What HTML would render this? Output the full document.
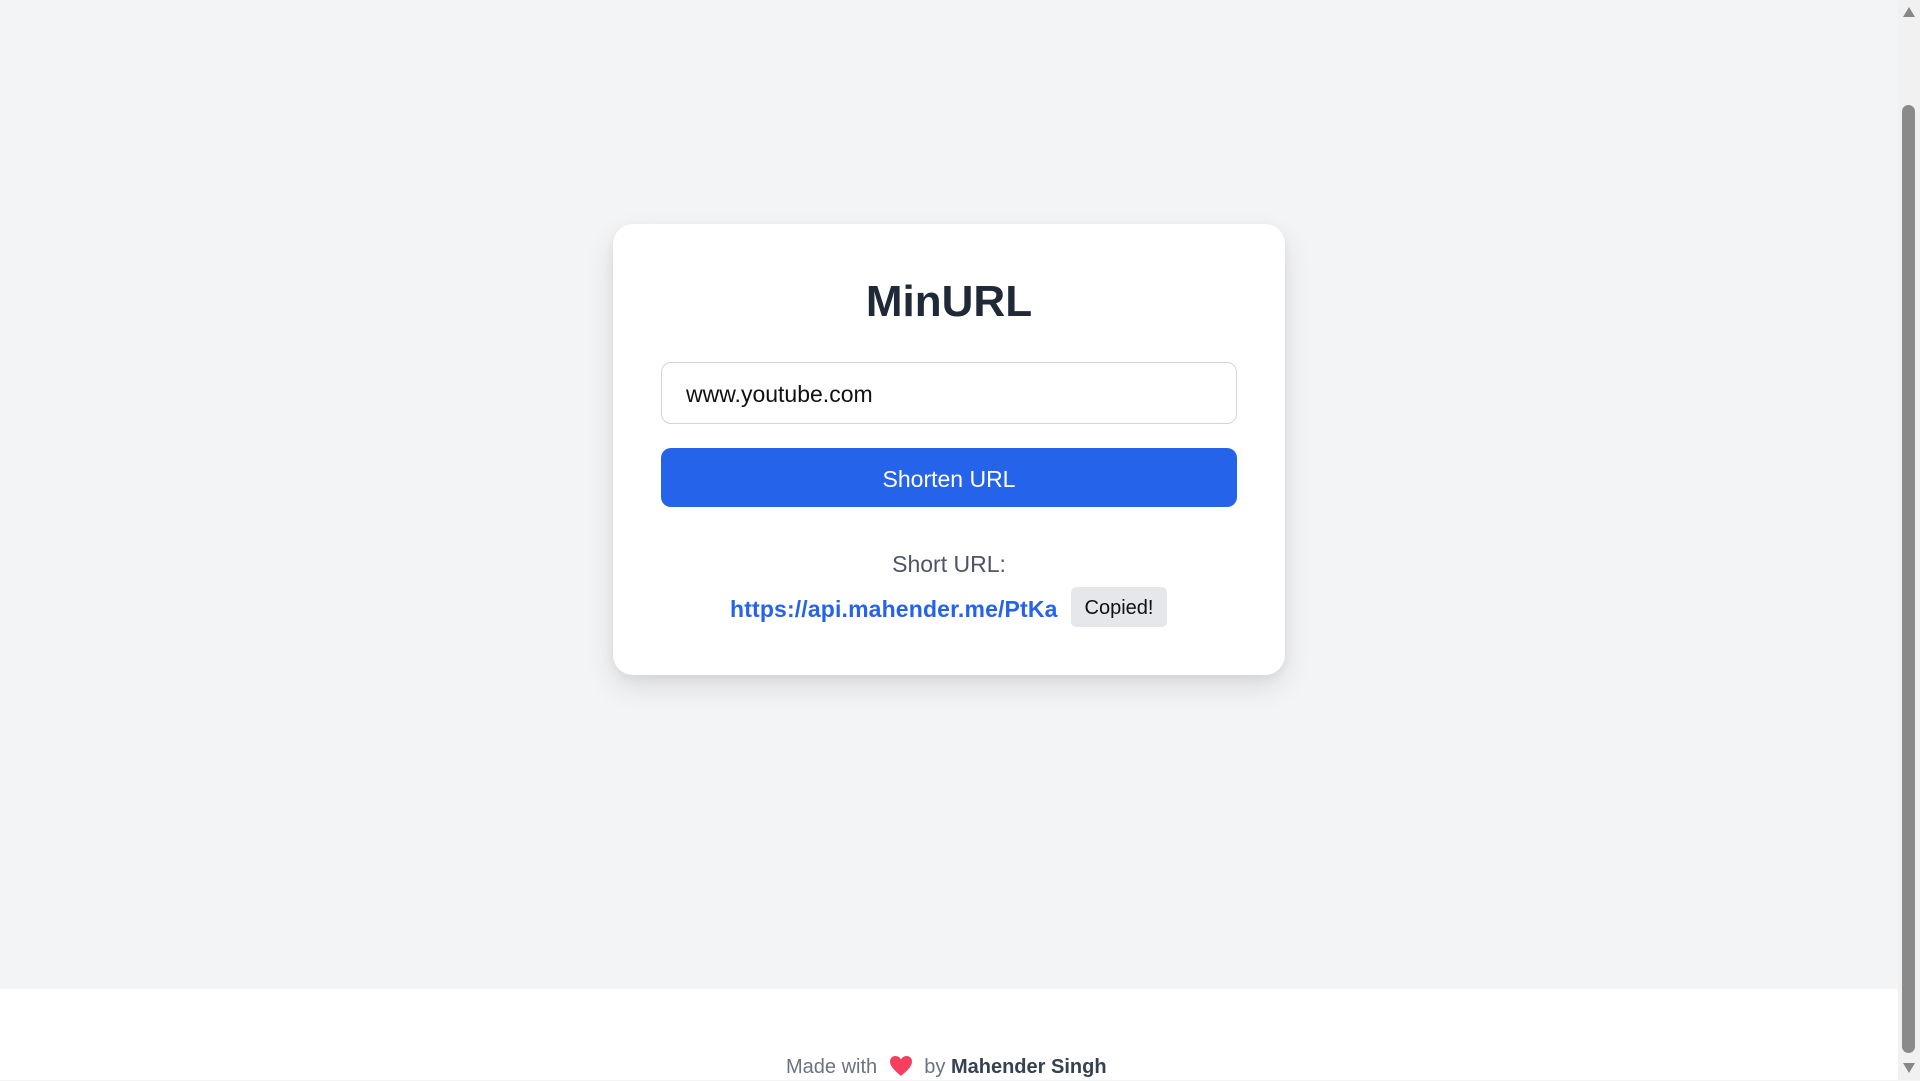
<!DOCTYPE html>
<html><head><meta charset="utf-8"><style>
*{box-sizing:border-box;margin:0;padding:0}
body{width:1920px;height:1080px;overflow:hidden;background:#f3f4f6;font-family:"Liberation Sans",sans-serif;position:relative}
.card{position:absolute;left:613px;top:224px;width:672px;height:451px;background:#fff;border-radius:20px;box-shadow:0 12px 30px rgba(0,0,0,0.10),0 4px 10px rgba(0,0,0,0.05)}
h1{position:absolute;left:0;top:274px;text-align:center;font-size:44px;font-weight:bold;color:#1f2937;line-height:56px}
.input{position:absolute;left:661px;top:362px;width:576px;height:62px;border:1.5px solid #d1d5db;border-radius:10px;font-size:23px;color:#111;padding-left:24px;line-height:62px}
.btn{position:absolute;left:661px;top:448px;width:576px;height:59px;background:#2563eb;border-radius:10px;color:#fff;font-size:23px;text-align:center;line-height:62px}
.lbl{position:absolute;left:0;top:549px;text-align:center;font-size:23px;color:#4b5563;line-height:30px}
.link{position:absolute;left:730px;top:594px;font-size:23px;font-weight:bold;color:#2563eb;line-height:30px;width:330px;text-align:left;letter-spacing:0.15px}
.copy{position:absolute;left:1071px;top:587px;width:96px;height:40px;background:#e5e7eb;border-radius:5px;font-size:20px;color:#111;text-align:center;line-height:42px}
.footer{position:absolute;left:0;top:989px;width:1898px;height:91px;background:#fff}
.ft{position:absolute;left:786px;top:1053px;font-size:20px;color:#6b7280;white-space:nowrap;line-height:28px}
.ft b{color:#374151}
.sb{position:absolute;right:0;top:0;width:22px;height:1080px;background:#f1f1f1}
.thumb{position:absolute;left:4px;top:105px;width:13px;height:948px;background:#8a8a8a;border-radius:7px}
</style></head><body>
<div class="card"></div>
<h1 style="width:1898px">MinURL</h1>
<div class="input">www.youtube.com</div>
<div class="btn">Shorten URL</div>
<div class="lbl" style="width:1898px">Short URL:</div>
<div class="link">https://api.mahender.me/PtKa</div>
<div class="copy">Copied!</div>
<div class="footer"></div>
<div class="ft">Made with <svg width="24" height="22" viewBox="0 0 24 22" style="vertical-align:-4px;margin:0 6px"><path d="M12 21 C5 15 1 11 1 6.5 C1 3 3.5 1 6.5 1 C9 1 11 2.5 12 4.5 C13 2.5 15 1 17.5 1 C20.5 1 23 3 23 6.5 C23 11 19 15 12 21Z" fill="#f43f5e"/></svg> by <b>Mahender Singh</b></div>
<div class="sb"><svg width="22" height="1080" style="position:absolute;left:0;top:0"><path d="M5 17 L11 7 L17 17Z" fill="#888"/><path d="M5 1063 L11 1073 L17 1063Z" fill="#888"/></svg><div class="thumb"></div></div>
</body></html>
